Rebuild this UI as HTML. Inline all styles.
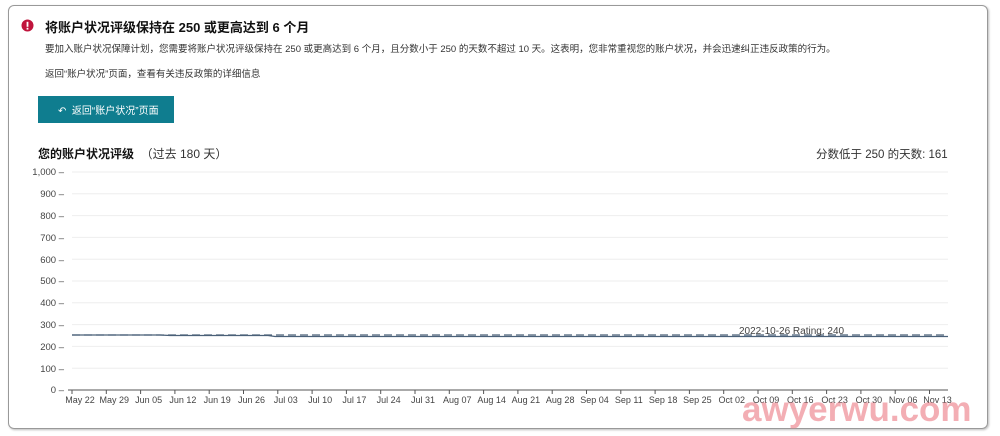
<!DOCTYPE html>
<html><head><meta charset="utf-8"><style>
body{margin:0;background:#fff;font-family:"Liberation Sans","Noto Sans CJK SC",sans-serif;}
.box{position:absolute;left:8px;top:5px;width:978px;height:422px;border:1px solid #999;border-radius:6px;box-shadow:1px 1px 2px #bbb;}
.t{position:absolute;white-space:nowrap;color:#111;}
</style></head><body>
<div class="box"></div>
<svg style="position:absolute;left:21px;top:19px" width="13" height="13"><circle cx="6.5" cy="6.5" r="6" fill="#c0143c"/><rect x="5.6" y="2.8" width="1.8" height="5" fill="#fff"/><rect x="5.6" y="8.8" width="1.8" height="1.8" fill="#fff"/></svg>
<div class="t" style="left:45px;top:17px;font-size:13px;font-weight:bold;">将账户状况评级保持在 250 或更高达到 6 个月</div>
<div class="t" style="left:45px;top:41px;font-size:9.5px;color:#333">要加入账户状况保障计划，您需要将账户状况评级保持在 250 或更高达到 6 个月，且分数小于 250 的天数不超过 10 天。这表明，您非常重视您的账户状况，并会迅速纠正违反政策的行为。</div>
<div class="t" style="left:45px;top:66px;font-size:9.5px;color:#333">返回“账户状况”页面，查看有关违反政策的详细信息</div>
<div style="position:absolute;left:38px;top:96px;width:136px;height:27px;background:#0f7d8f;"></div>
<div class="t" style="left:58px;top:102px;font-size:10px;color:#fff">↶ &nbsp;返回“账户状况”页面</div>
<div class="t" style="left:38px;top:145px;font-size:12px;font-weight:bold;">您的账户状况评级 <span style="font-weight:normal;color:#333">&nbsp;（过去 180 天）</span></div>
<div class="t" style="left:816px;top:146px;font-size:11.5px;color:#333">分数低于 250 的天数: 161</div>
<svg style="position:absolute;left:0;top:0" width="1000" height="436" font-family="Liberation Sans" font-size="9.5" fill="#444">
<g stroke="#eee" stroke-width="1">
<line x1="72" x2="948" y1="172" y2="172"/><line x1="72" x2="948" y1="193.8" y2="193.8"/><line x1="72" x2="948" y1="215.6" y2="215.6"/><line x1="72" x2="948" y1="237.4" y2="237.4"/><line x1="72" x2="948" y1="259.2" y2="259.2"/><line x1="72" x2="948" y1="281" y2="281"/><line x1="72" x2="948" y1="302.8" y2="302.8"/><line x1="72" x2="948" y1="324.6" y2="324.6"/><line x1="72" x2="948" y1="346.4" y2="346.4"/><line x1="72" x2="948" y1="368.2" y2="368.2"/>
</g>
<g text-anchor="end">
<text x="64" y="175">1,000 –</text><text x="64" y="197">900 –</text><text x="64" y="219">800 –</text><text x="64" y="241">700 –</text><text x="64" y="263">600 –</text><text x="64" y="284">500 –</text><text x="64" y="306">400 –</text><text x="64" y="328">300 –</text><text x="64" y="350">200 –</text><text x="64" y="372">100 –</text><text x="64" y="393">0 –</text>
</g>
<line x1="68" x2="948" y1="390" y2="390" stroke="#555"/>
<polyline fill="none" stroke="#4a6078" stroke-width="1.3" points="72,335 160,335 170,335.5 268,335.5 275,336.5 948,336.5"/>
<line x1="72" x2="948" y1="335" y2="335" stroke="#4a6078" stroke-width="1.2" stroke-dasharray="8,4"/>
<text x="739" y="334" font-size="10">2022-10-26 Rating: 240</text>
<g text-anchor="middle" id="xl" font-size="9"></g>
<g stroke="#555" id="tk"></g>
</svg>
<script>
var d=["May 22","May 29","Jun 05","Jun 12","Jun 19","Jun 26","Jul 03","Jul 10","Jul 17","Jul 24","Jul 31","Aug 07","Aug 14","Aug 21","Aug 28","Sep 04","Sep 11","Sep 18","Sep 25","Oct 02","Oct 09","Oct 16","Oct 23","Oct 30","Nov 06","Nov 13"];
var g=document.getElementById("xl"),t=document.getElementById("tk"),ns="http://www.w3.org/2000/svg";
d.forEach(function(s,i){var x=72+i*34.3;var e=document.createElementNS(ns,"text");e.setAttribute("x",x+8);e.setAttribute("y",403);e.textContent=s;g.appendChild(e);
var l=document.createElementNS(ns,"line");l.setAttribute("x1",x);l.setAttribute("x2",x);l.setAttribute("y1",390);l.setAttribute("y2",394);t.appendChild(l);});
</script>
<div class="t" style="left:742px;top:390px;font-size:35px;color:rgba(235,120,130,0.6);font-weight:bold;letter-spacing:0px">awyerwu.com</div>
</body></html>
